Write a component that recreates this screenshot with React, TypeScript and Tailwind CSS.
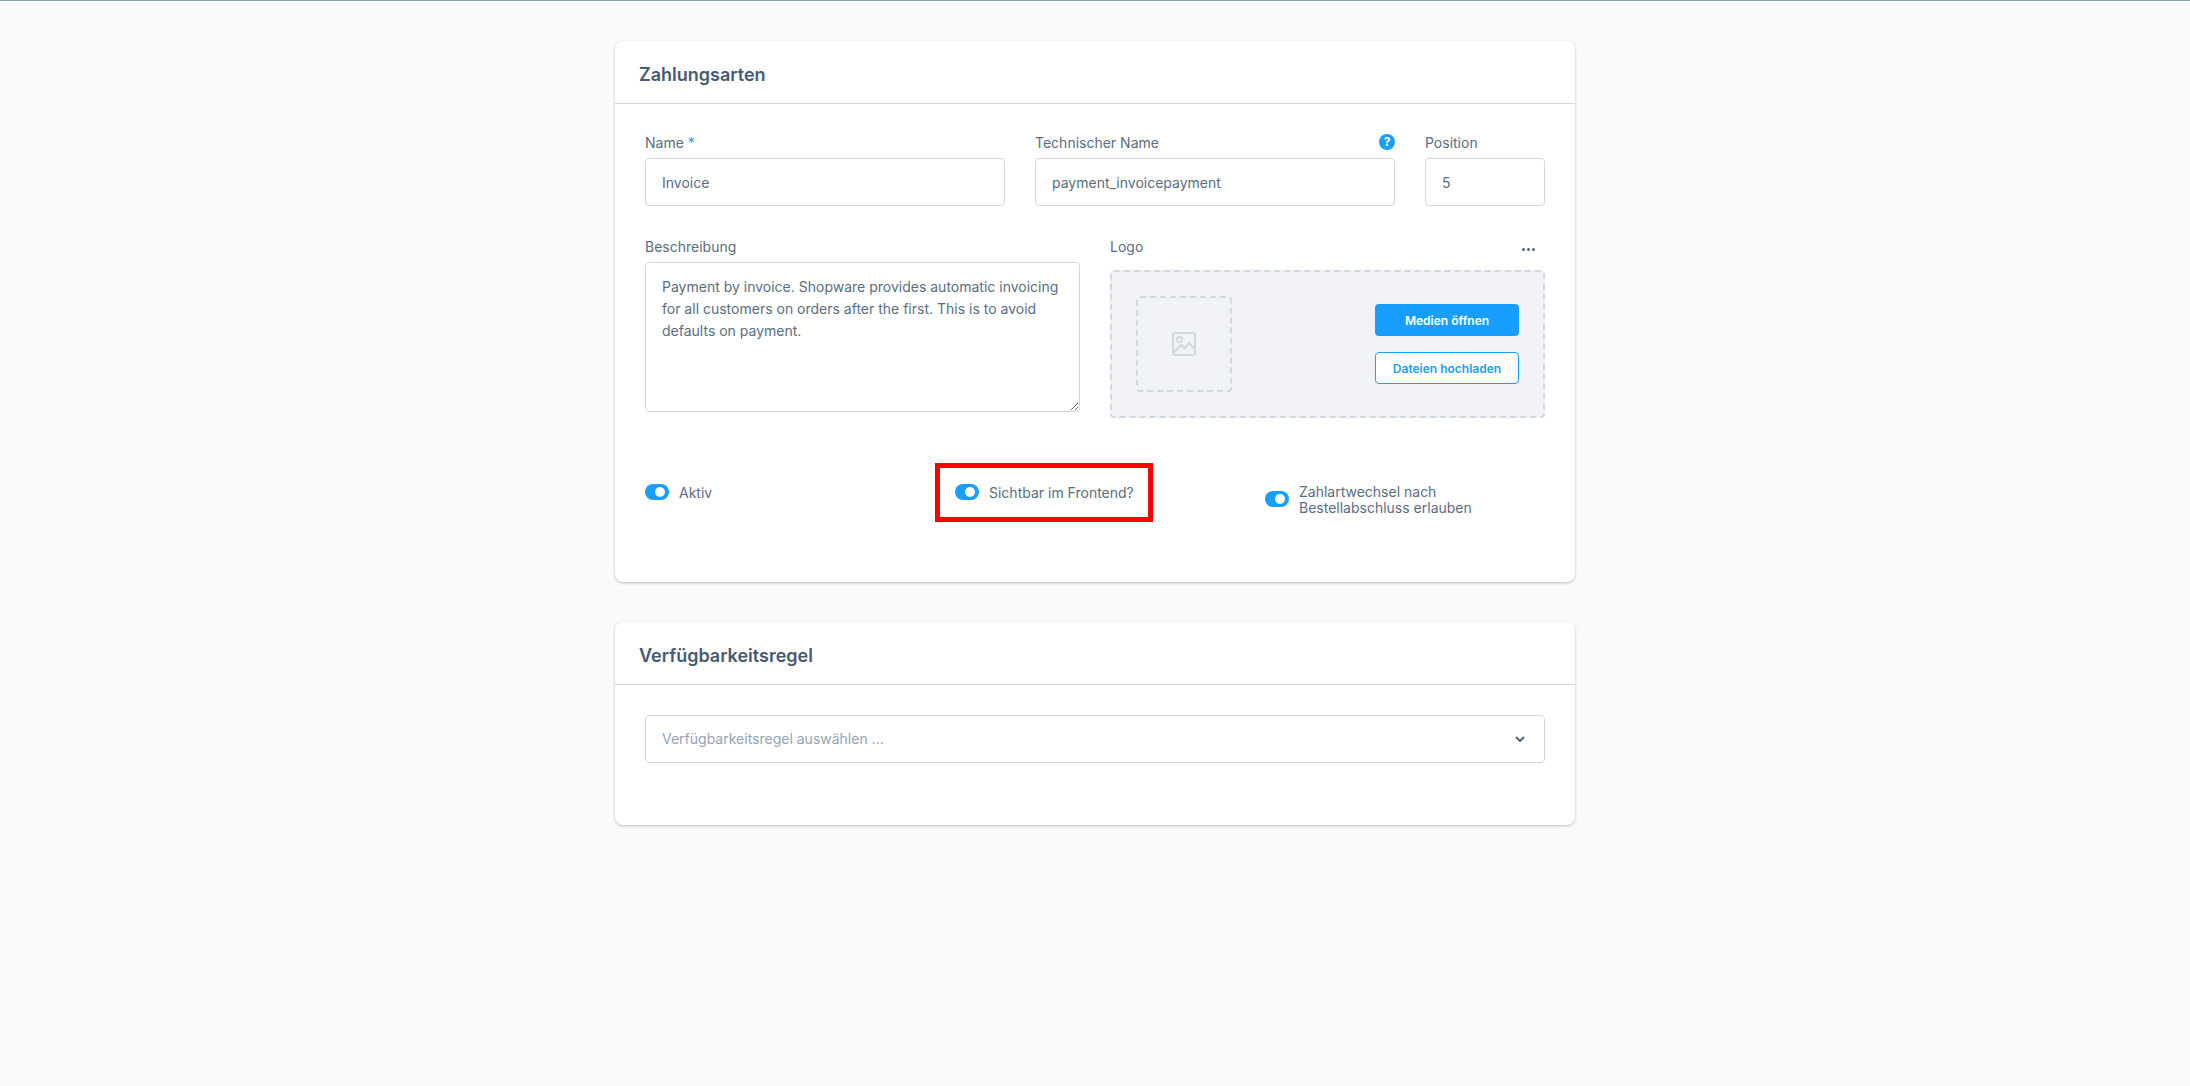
const labelClass = 'block text-sm leading-[18px] text-[#5a6d81]';
const inputClass =
  'block h-12 w-full rounded border border-[#d1d9e0] bg-white px-4 text-sm leading-[22px] text-[#5a6d81] outline-none';

function Card({ title, children }: { title: string; children: React.ReactNode }) {
  return (
    <section className="w-[960px] rounded-lg bg-white shadow-[0_1px_3px_rgba(0,0,0,0.25)]">
      <h2 className="flex h-[63px] items-center border-b border-[#d1d9e0] px-6 pt-[5px] text-lg font-semibold leading-none text-[#475a70]">
        {title}
      </h2>
      {children}
    </section>
  );
}

function Toggle({ children }: { children: React.ReactNode }) {
  return (
    <div className="flex items-center">
      <span className="mb-[2px] flex h-4 w-6 shrink-0 items-center justify-end rounded-full bg-[#189eff] pr-1">
        <span className="h-[10px] w-[10px] rounded-full bg-white" />
      </span>
      <span className="ml-[10px] text-sm leading-4 text-[#5a6d81]">{children}</span>
    </div>
  );
}

function ImagePlaceholder() {
  return (
    <svg width="24" height="24" viewBox="0 0 24 24" fill="none" stroke="#d1d9e0" strokeWidth="2" strokeLinejoin="round">
      <rect x="1" y="1" width="22" height="22" rx="2" />
      <circle cx="7.5" cy="7.5" r="2.5" />
      <path d="M1.5 21 9 13l3.5 3.5L17 11l6 6.5" />
    </svg>
  );
}

export default function App() {
  return (
    <div className="min-h-[1086px] border-t border-[#8da3b8] bg-[#f9fafb] pt-10 font-['Inter',sans-serif]">
      <div className="flex flex-col items-center gap-10">
        <Card title="Zahlungsarten">
          <div className="relative px-[30px] pt-[30px] pb-[66px]">
            <div className="grid grid-cols-[360px_360px_120px] gap-x-[30px]">
              <div>
                <label className={labelClass}>
                  Name <span className="text-[#189eff]">*</span>
                </label>
                <input readOnly defaultValue="Invoice" className={`mt-[6px] ${inputClass}`} />
              </div>
              <div>
                <div className="flex items-start justify-between">
                  <label className={labelClass}>Technischer Name</label>
                  <span className="flex h-4 w-4 items-center justify-center rounded-full bg-[#189eff] text-xs font-bold leading-none text-white">
                    ?
                  </span>
                </div>
                <input readOnly defaultValue="payment_invoicepayment" className={`mt-[6px] ${inputClass}`} />
              </div>
              <div>
                <label className={labelClass}>Position</label>
                <input readOnly defaultValue="5" className={`mt-[6px] ${inputClass}`} />
              </div>
            </div>

            <div className="mt-8 grid grid-cols-2 gap-x-[30px]">
              <div>
                <label className={labelClass}>Beschreibung</label>
                <textarea
                  readOnly
                  defaultValue="Payment by invoice. Shopware provides automatic invoicing for all customers on orders after the first. This is to avoid defaults on payment."
                  className="mt-[6px] block h-[150px] w-full rounded border border-[#d1d9e0] bg-white px-4 py-[13px] text-sm leading-[22px] text-[#5a6d81] outline-none"
                />
              </div>
              <div>
                <div className="flex items-start justify-between">
                  <label className={labelClass}>Logo</label>
                  <span className="mr-[10px] mt-[10px] flex gap-[2px]">
                    <i className="h-[3px] w-[3px] rounded-full bg-[#52667a]" />
                    <i className="h-[3px] w-[3px] rounded-full bg-[#52667a]" />
                    <i className="h-[3px] w-[3px] rounded-full bg-[#52667a]" />
                  </span>
                </div>
                <div className="mt-[14px] flex items-center justify-between rounded border-2 border-dashed border-[#d1d9e0] bg-[#f0f2f5] p-6">
                  <div className="flex h-24 w-24 items-center justify-center rounded border-2 border-dashed border-[#d1d9e0]">
                    <ImagePlaceholder />
                  </div>
                  <div className="flex w-36 flex-col gap-4">
                    <button className="h-8 rounded bg-[#189eff] pt-px text-xs font-semibold text-white">
                      Medien öffnen
                    </button>
                    <button className="h-8 rounded border border-[#189eff] bg-white pt-px text-xs font-semibold text-[#189eff]">
                      Dateien hochladen
                    </button>
                  </div>
                </div>
              </div>
            </div>

            <div className="mt-[66px] grid grid-cols-3 items-start gap-x-[30px]">
              <Toggle>Aktiv</Toggle>
              <Toggle>Sichtbar im Frontend?</Toggle>
              <Toggle>
                Zahlartwechsel nach
                <br />
                Bestellabschluss erlauben
              </Toggle>
            </div>

            {/* red annotation frame from the screenshot */}
            <div className="absolute left-[320px] top-[359px] h-[59px] w-[218px] border-[5px] border-[#ff0000]" />
          </div>
        </Card>

        <Card title="Verfügbarkeitsregel">
          <div className="px-[30px] pt-[30px] pb-[62px]">
            <div className="flex h-12 items-center justify-between rounded border border-[#d1d9e0] bg-white pl-4 pr-[19px] text-sm text-[#94a3b4]">
              <span>Verfügbarkeitsregel auswählen ...</span>
              <svg width="10" height="6" viewBox="0 0 10 6" fill="none" stroke="#52667a" strokeWidth="2">
                <path d="M1 1l4 4 4-4" />
              </svg>
            </div>
          </div>
        </Card>
      </div>
    </div>
  );
}
